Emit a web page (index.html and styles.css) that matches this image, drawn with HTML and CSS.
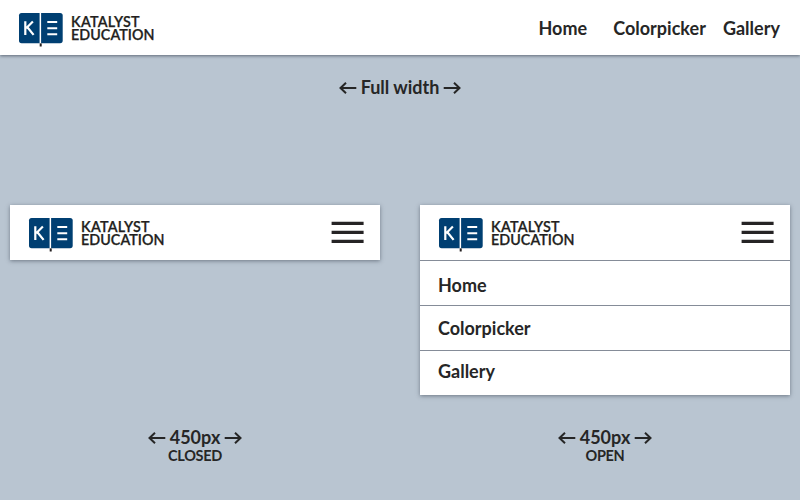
FILE: index.html
```
<!DOCTYPE html>
<html lang="en">
<head>
<meta charset="utf-8">
<title>Katalyst Education</title>
<link rel="stylesheet" href="styles.css">
</head>
<body>
<svg class="defs" width="0" height="0" aria-hidden="true">
  <symbol id="logo" viewBox="0 0 46 36">
    <rect x="1" y="0" width="43.7" height="30.2" rx="2.6" fill="#003f72"/>
    <rect x="21.6" y="0" width="1.5" height="30.5" fill="#fff"/>
    <rect x="21.7" y="30.4" width="2" height="3.1" fill="#231f20"/>
    <path d="M7.3 8.2v13.8M14.9 8.4L8.2 15.2M9.2 14L15.6 21.9" fill="none" stroke="#fff" stroke-width="2.2"/>
    <path d="M29.3 9h9.9M29.3 15.2h9.9M29.3 21.2h9.900" stroke="#fff" stroke-width="2"/>
  </symbol>
  <symbol id="menu" viewBox="0 0 33 22">
    <path d="M.6 2.3h32M.6 11.3h32M.6 20.3h32" stroke="#262425" stroke-width="3.3"/>
  </symbol>
  <symbol id="left" viewBox="0 0 18 12">
    <path d="M17.3 6H1.5M7 .8L1.5 6 7 11.2" fill="none" stroke="#262626" stroke-width="2"/>
  </symbol>
  <symbol id="right" viewBox="0 0 18 12">
    <path d="M.7 6h15.8M11 .8L16.5 6 11 11.2" fill="none" stroke="#262626" stroke-width="2"/>
  </symbol>
</svg>
<header class="bar bar-full">
  <div class="brand"><svg class="logo"><use href="#logo"/></svg><div class="wordmark"><div class="katalyst">KATALYST</div><div class="education">EDUCATION</div></div></div>
  <nav class="nav"><a>Home</a><a>Colorpicker</a><a>Gallery</a></nav>
</header>
<p class="caption caption-full"><svg class="arrow"><use href="#left"/></svg><span>Full width</span><svg class="arrow"><use href="#right"/></svg></p>
<main class="examples">
  <section class="example">
    <div class="panel">
      <div class="bar"><div class="brand"><svg class="logo"><use href="#logo"/></svg><div class="wordmark"><div class="katalyst">KATALYST</div><div class="education">EDUCATION</div></div></div><svg class="menu"><use href="#menu"/></svg></div>
    </div>
    <div class="label">
      <p class="caption"><svg class="arrow"><use href="#left"/></svg><span>450px</span><svg class="arrow"><use href="#right"/></svg></p>
      <p class="state">CLOSED</p>
    </div>
  </section>
  <section class="example">
    <div class="panel">
      <div class="bar"><div class="brand"><svg class="logo"><use href="#logo"/></svg><div class="wordmark"><div class="katalyst">KATALYST</div><div class="education">EDUCATION</div></div></div><svg class="menu"><use href="#menu"/></svg></div>
      <nav class="list"><a>Home</a><a>Colorpicker</a><a>Gallery</a></nav>
    </div>
    <div class="label">
      <p class="caption"><svg class="arrow"><use href="#left"/></svg><span>450px</span><svg class="arrow"><use href="#right"/></svg></p>
      <p class="state">OPEN</p>
    </div>
  </section>
</main>
</body>
</html>
```
FILE: styles.css
```
* { box-sizing: border-box; }
body {
  margin: 0;
  height: 500px;
  overflow: hidden;
  background: #b9c5d1;
  color: #262626;
  font: bold 18px/22px Lato, sans-serif;
}
p { margin: 0; }
svg { display: block; flex: none; }
.defs { position: absolute; }
.bar {
  display: flex;
  justify-content: space-between;
  height: 55px;
  padding: 13px 16px 0 18px;
  background: #fff;
}
.bar-full {
  padding-right: 20px;
  box-shadow: 0 1px 3px rgba(35, 45, 60, .6);
}
.brand { display: flex; }
.logo { width: 46px; height: 36px; }
.wordmark {
  padding: 3px 0 0 7px;
  color: #231f20;
  font-size: 14.3px;
  font-weight: 600;
  line-height: 12.5px;
  -webkit-text-stroke: .25px #231f20;
}
.katalyst { letter-spacing: .25px; }
.education { letter-spacing: .05px; }
.menu { width: 33px; height: 22px; margin-top: 3px; }
.nav { display: flex; padding-top: 4px; letter-spacing: .02px; }
.nav a + a { margin-left: 26px; }
.nav a:last-child { margin-left: 17px; }
.caption {
  display: flex;
  justify-content: center;
  align-items: center;
  gap: 4px;
}
.caption-full { margin-top: 21px; }
.arrow { width: 18px; height: 12px; margin-top: 2px; }
.examples {
  display: grid;
  grid-template-columns: 370px 370px;
  gap: 40px;
  padding: 0 10px;
  margin-top: 107px;
}
.example {
  display: flex;
  flex-direction: column;
  justify-content: space-between;
  height: 258px;
}
.panel {
  background: #fff;
  box-shadow: 0 1px 4px rgba(35, 45, 60, .5);
}
.list a {
  display: block;
  height: 45px;
  padding: 13px 18px 0;
  border-top: 1px solid #858c98;
}
.list a:nth-child(2) { padding-top: 11px; }
.list a:nth-child(3) { padding-top: 9px; }
.label { text-align: center; }
.state { font-size: 14.5px; line-height: 15px; letter-spacing: -.3px; }
```
